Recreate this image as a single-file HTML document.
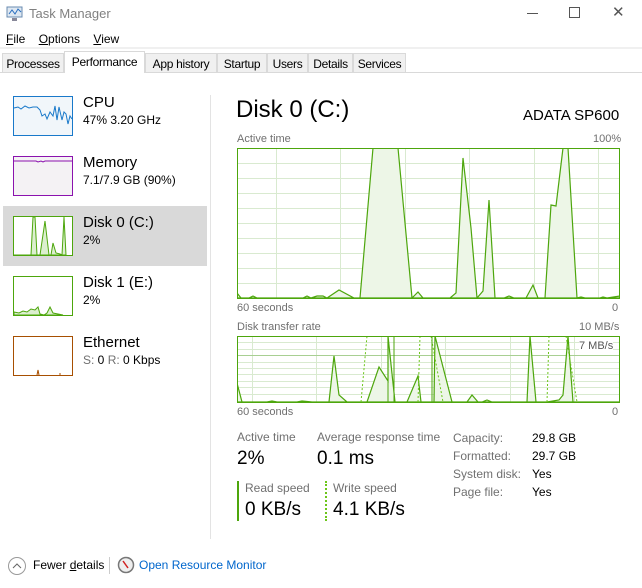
<!DOCTYPE html>
<html><head><meta charset="utf-8"><style>
*{margin:0;padding:0;box-sizing:border-box}
body{width:642px;height:588px;background:#fff;font-family:"Liberation Sans",sans-serif;color:#000;position:relative;overflow:hidden}
.a{position:absolute;white-space:nowrap}
.tab{position:absolute;top:53px;height:20px;border:1px solid #d9d9d9;background:#f0f0f0;font-size:12px;padding:3px 0 0;text-align:center;white-space:nowrap;letter-spacing:-0.3px;overflow:hidden}
.lbl{color:#707070;font-size:11px}
.side .t{font-size:15px}
.side .s{font-size:12px}
</style></head><body>
<svg class="a" style="left:6px;top:6px" width="18" height="16"><rect x="1" y="1" width="15" height="10" fill="#dfe8f2" stroke="#6a8bb0"/><polyline points="3,8 6,4 9,8 12,3 15,6" fill="none" stroke="#2a6fc0"/><rect x="6" y="12" width="5" height="3" fill="#889"/></svg>
<div class="a" style="left:29px;top:6px;font-size:13px;color:#808080">Task Manager</div>
<div class="a" style="left:527px;top:13px;width:11px;height:1px;background:#555"></div>
<div class="a" style="left:569px;top:7px;width:11px;height:11px;border:1px solid #555"></div>
<div class="a" style="left:612px;top:3px;font-size:15px;color:#555">✕</div>
<div class="a" style="left:6px;top:32px;font-size:12px"><u>F</u>ile&nbsp;&nbsp;&nbsp;&nbsp;<u>O</u>ptions&nbsp;&nbsp;&nbsp;&nbsp;<u>V</u>iew</div>
<div class="a" style="left:0;top:47px;width:642px;height:2px;background:#f0f0f0"></div>
<div class="a" style="left:0;top:72px;width:642px;height:1px;background:#d9d9d9"></div>
<div class="tab" style="left:2px;width:62px">Processes</div>
<div class="tab" style="left:64px;top:51px;height:22px;width:81px;background:#fff;border-bottom:none">Performance</div>
<div class="tab" style="left:145px;width:72px">App history</div>
<div class="tab" style="left:217px;width:50px">Startup</div>
<div class="tab" style="left:267px;width:41px">Users</div>
<div class="tab" style="left:308px;width:45px">Details</div>
<div class="tab" style="left:353px;width:53px">Services</div>

<div class="a" style="left:210px;top:95px;width:1px;height:444px;background:#e3e3e3"></div>
<div class="a" style="left:3px;top:206px;width:204px;height:60px;background:#d9d9d9"></div>
<div class="side">
<svg class="a" style="left:13px;top:96px" width="60" height="40"><rect x=".5" y=".5" width="59" height="39" fill="#f1f6fa" stroke="#1979ca"/><polyline points="1,12 5,11 8,13 12,10 16,12 20,11 24,11 27,14 29,20 32,18 34,23 37,16 40,20 42,10 44,24 46,11 49,24 51,16 53,18 55,28 57,20 59,23" fill="none" stroke="#1979ca"/></svg>
<div class="a t" style="left:83px;top:94px">CPU</div><div class="a s" style="left:83px;top:113px">47% 3.20 GHz</div>
<svg class="a" style="left:13px;top:156px" width="60" height="40"><rect x=".5" y=".5" width="59" height="39" fill="#f4f2f4" stroke="#8b12ae"/><polyline points="1,5 23,5 25,6 28,5 30,6 32,5 59,5" fill="none" stroke="#8b12ae"/></svg>
<div class="a t" style="left:83px;top:154px">Memory</div><div class="a s" style="left:83px;top:173px">7.1/7.9 GB (90%)</div>
<svg class="a" style="left:13px;top:216px" width="60" height="40"><rect x=".5" y=".5" width="59" height="39" fill="#fff" stroke="#4da60c"/><polygon points="1,39 18,39 20,1 22,1 24,39 27,39 32,5 36,39 38,39 40,27 43,37 47,38 49,39 51,1 53,39" fill="#dcefcf" stroke="#4da60c"/></svg>
<div class="a t" style="left:83px;top:214px">Disk 0 (C:)</div><div class="a s" style="left:83px;top:233px">2%</div>
<svg class="a" style="left:13px;top:276px" width="60" height="40"><rect x=".5" y=".5" width="59" height="39" fill="#fff" stroke="#4da60c"/><polygon points="1,39 1,36 6,37 10,35 14,36 18,33 22,34 25,31 27,38 31,39 34,37 37,31 40,37 45,38 50,39" fill="#dcefcf" stroke="#4da60c"/></svg>
<div class="a t" style="left:83px;top:274px">Disk 1 (E:)</div><div class="a s" style="left:83px;top:293px">2%</div>
<svg class="a" style="left:13px;top:336px" width="60" height="40"><rect x=".5" y=".5" width="59" height="39" fill="#fff" stroke="#a74f01"/><polyline points="24,39 25,34 26,39" fill="none" stroke="#a74f01"/><line x1="46" y1="38" x2="48" y2="38" stroke="#a74f01"/></svg>
<div class="a t" style="left:83px;top:334px">Ethernet</div><div class="a s" style="left:83px;top:353px"><span style="color:#707070">S:</span> 0 <span style="color:#707070">R:</span> 0 Kbps</div>
</div>

<div class="a" style="left:236px;top:96px;font-size:24px">Disk 0 (C:)</div>
<div class="a" style="left:523px;top:107px;font-size:15px">ADATA SP600</div>
<div class="a lbl" style="left:237px;top:133px">Active time</div>
<div class="a lbl" style="left:593px;top:133px">100%</div>
<svg class="a" style="left:237px;top:148px" width="383" height="151">
<g stroke="#d9ead0" stroke-width="1">
<path d="M0 15.5H383M0 30.5H383M0 45.5H383M0 60.5H383M0 75.5H383M0 90.5H383M0 105.5H383M0 120.5H383M0 135.5H383"/>
<path d="M39.5 0V151M103.5 0V151M168.5 0V151M232.5 0V151M297.5 0V151M361.5 0V151"/>
</g>
<polygon points="0,150 0,145 4,150 12,150 16,148 20,150 66,150 70,148 74,150 80,148 86,148 90,150 102,142 117,150 123,150 136,0 161,0 175,150 181,144 186,150 213,150 219,145 226,10 234,80 240,150 246,143 252,52 258,150 267,150 272,148 277,150 289,150 296,137 301,150 308,150 314,57 319,58 326,0 331,0 340,150 344,149 348,150 363,150 366,149 370,150 383,148 383,150" fill="#edf6e7" stroke="#4da60c" stroke-width="1.2"/>
<rect x=".5" y=".5" width="382" height="150" fill="none" stroke="#4da60c"/>
</svg>
<div class="a lbl" style="left:237px;top:302px">60 seconds</div>
<div class="a lbl" style="left:612px;top:302px">0</div>

<div class="a lbl" style="left:237px;top:321px">Disk transfer rate</div>
<div class="a lbl" style="left:579px;top:321px">10 MB/s</div>
<svg class="a" style="left:237px;top:336px" width="383" height="67">
<g stroke="#d9ead0"><path d="M0 6.5H383M0 13.5H383M0 19.5H383M0 26.5H383M0 32.5H383M0 38.5H383M0 45.5H383M0 51.5H383M0 58.5H383M15.5 0V67M79.5 0V67M144.5 0V67M208.5 0V67M273.5 0V67M337.5 0V67"/></g>
<path d="M0 19.5H383" stroke="#a8cf92"/>
<polygon points="0,66 0,47 5,66 30,66 35,65 40,66 60,66 65,65 75,66 92,66 97,20 102,59 110,66 130,66 142,31 151,45 151,0 158,66 170,66 181,40 184,66 197,66 198,0 215,66 230,66 235,59 241,66 245,66 250,64 255,66 290,66 293,0 299,66 310,66 322,64 326,59 331,0 336,66 383,66" fill="#edf6e7" stroke="#4da60c" stroke-width="1.2"/>
<g stroke="#6cc61a" stroke-dasharray="2,2"><path d="M124 66L130 0M181 66L183 0M194 0L206 66M310 66L312 0M329 0L340 66"/></g>
<path d="M151 0V66M157 0V66M195 0V66" stroke="#4da60c"/>
<rect x=".5" y=".5" width="382" height="66" fill="none" stroke="#4da60c"/>
</svg>
<div class="a lbl" style="left:579px;top:340px;background:#fff;color:#555">7 MB/s</div>
<div class="a lbl" style="left:237px;top:406px">60 seconds</div>
<div class="a lbl" style="left:612px;top:406px">0</div>

<div class="a lbl" style="left:237px;top:430px;font-size:12px">Active time</div>
<div class="a" style="left:237px;top:448px;font-size:19px">2%</div>
<div class="a lbl" style="left:317px;top:430px;font-size:12px">Average response time</div>
<div class="a" style="left:317px;top:448px;font-size:19px">0.1 ms</div>
<div class="a" style="left:237px;top:481px;width:2px;height:40px;background:#4da60c"></div>
<div class="a lbl" style="left:245px;top:481px;font-size:12px">Read speed</div>
<div class="a" style="left:245px;top:499px;font-size:19px">0 KB/s</div>
<div class="a" style="left:325px;top:481px;width:0;height:40px;border-left:2px dotted #6cc61a"></div>
<div class="a lbl" style="left:333px;top:481px;font-size:12px">Write speed</div>
<div class="a" style="left:333px;top:499px;font-size:19px">4.1 KB/s</div>
<div class="a lbl" style="left:453px;top:429px;font-size:12px;line-height:18px">Capacity:<br>Formatted:<br>System disk:<br>Page file:</div>
<div class="a" style="left:532px;top:429px;font-size:12px;line-height:18px">29.8 GB<br>29.7 GB<br>Yes<br>Yes</div>

<svg class="a" style="left:7px;top:556px" width="20" height="20"><circle cx="10" cy="10" r="8.5" fill="none" stroke="#999"/><polyline points="6,12 10,8 14,12" fill="none" stroke="#666"/></svg>
<div class="a" style="left:33px;top:558px;font-size:12px">Fewer <u>d</u>etails</div>
<div class="a" style="left:109px;top:557px;width:1px;height:17px;background:#ccc"></div>
<svg class="a" style="left:117px;top:556px" width="18" height="18"><circle cx="9" cy="9" r="7.5" fill="#eee" stroke="#777" stroke-width="1.5"/><line x1="6" y1="5" x2="11" y2="12" stroke="#d02020" stroke-width="1.5"/></svg>
<div class="a" style="left:139px;top:558px;font-size:12px;color:#0066cc">Open Resource Monitor</div>
</body></html>
